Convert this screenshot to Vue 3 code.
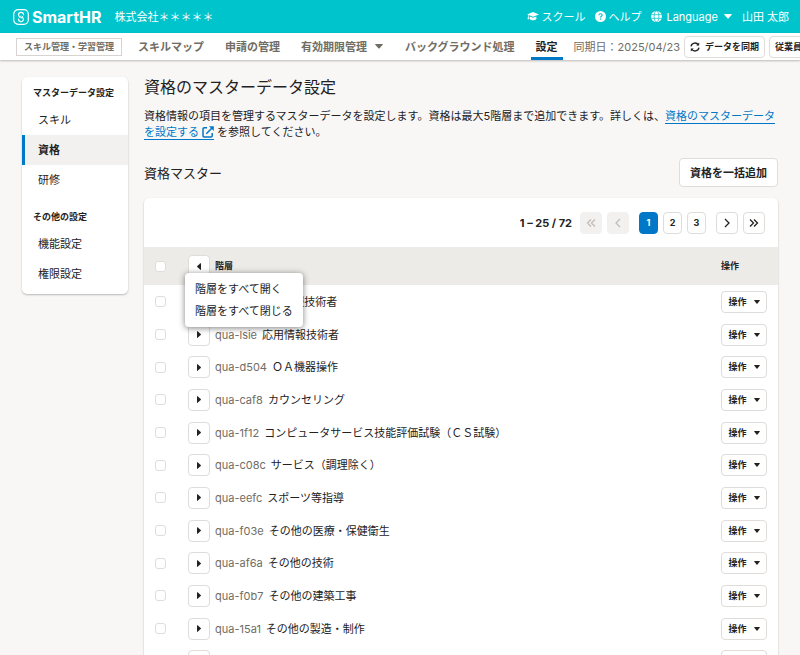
<script setup>
import { ref } from 'vue'

const menuOpen = ref(true)

const navItems = [
  { label: 'スキルマップ' },
  { label: '申請の管理' },
  { label: '有効期限管理', caret: true },
  { label: 'バックグラウンド処理' },
  { label: '設定', current: true },
]

const sideGroups = [
  {
    title: 'マスターデータ設定',
    items: [{ label: 'スキル' }, { label: '資格', current: true }, { label: '研修' }],
  },
  {
    title: 'その他の設定',
    items: [{ label: '機能設定' }, { label: '権限設定' }],
  },
]

const rows = [
  { code: 'qua-1fj1', name: '基本情報技術者' },
  { code: 'qua-lsie', name: '応用情報技術者' },
  { code: 'qua-d504', name: 'ＯＡ機器操作' },
  { code: 'qua-caf8', name: 'カウンセリング' },
  { code: 'qua-1f12', name: 'コンピュータサービス技能評価試験（ＣＳ試験）' },
  { code: 'qua-c08c', name: 'サービス（調理除く）' },
  { code: 'qua-eefc', name: 'スポーツ等指導' },
  { code: 'qua-f03e', name: 'その他の医療・保健衛生' },
  { code: 'qua-af6a', name: 'その他の技術' },
  { code: 'qua-f0b7', name: 'その他の建築工事' },
  { code: 'qua-15a1', name: 'その他の製造・制作' },
  { code: 'qua-3c9d', name: 'その他の専門・技術' },
]
</script>

<template>
  <div class="page">
    <header class="topbar">
      <a class="logo" href="#">
        <svg width="16" height="16" viewBox="0 0 16 16" fill="none" stroke="currentColor" aria-hidden="true">
          <rect x="0.7" y="0.7" width="14.6" height="14.6" rx="4.500" stroke-width="1.200" />
          <path d="M10.600 6.300V6A2.500 2.500 0 0 0 5.500 6c0 1.300.9 1.700 2.500 2.100s2.500.9 2.500 2a2.500 2.500 0 0 1-5 0V9.700" stroke-width="1.200" />
          <path d="M7.900 6.100v.3M8 9.700v.3M5.900 8.700 7 7.900M9 8.100l1.200-.9" stroke-width="1" />
        </svg>
        <span class="logo-text">SmartHR</span>
      </a>
      <span class="company">株式会社＊＊＊＊＊</span>
      <div class="top-links">
        <a href="#" class="top-link">
          <svg width="12" height="11" viewBox="0 0 12 11" fill="currentColor" aria-hidden="true">
            <path d="M6 1 12 3.4 6 5.8 1.6 4.1v1.3l.5 2.8H.5L1 5.4V3.8L0 3.4z" />
            <path d="M2.8 5.4 6 6.7l3.2-1.3.3 2.4C9.300 8.700 7.700 9.300 6 9.300S2.700 8.700 2.500 7.800z" />
          </svg>
          スクール
        </a>
        <a href="#" class="top-link">
          <svg width="11" height="11" viewBox="0 0 12 12" aria-hidden="true">
            <circle cx="6" cy="6" r="6" fill="currentColor" />
            <path d="M4.200 4.600C4.300 3.500 5 3 6 3s1.800.600 1.800 1.500C7.800 5.700 6.100 5.700 6.100 7" fill="none" stroke="#00c4cc" stroke-width="1.300" />
            <circle cx="6.100" cy="8.800" r="0.850" fill="#00c4cc" />
          </svg>
          ヘルプ
        </a>
        <button type="button" class="top-link language">
          <svg width="11" height="11" viewBox="0 0 12 12" aria-hidden="true">
            <circle cx="6" cy="6" r="6" fill="currentColor" />
            <g fill="none" stroke="#00c4cc" stroke-width="0.800">
              <ellipse cx="6" cy="6" rx="2.600" ry="6" />
              <path d="M0 4h12M0 8h12" />
            </g>
          </svg>
          <span>Language</span>
          <svg class="caret" width="8" height="5" viewBox="0 0 8 5" fill="currentColor" aria-hidden="true"><path d="M.600 0h6.800q.800 0 .3.700L4.600 4.300q-.600.600-1.200 0L.3.700Q-.2 0 .6 0z" /></svg>
        </button>
        <a href="#" class="top-link">山田 太郎</a>
      </div>
    </header>

    <nav class="appnav" aria-label="メイン">
      <span class="app-tag">スキル管理・学習管理</span>
      <ul class="nav-list">
        <li v-for="item in navItems" :key="item.label">
          <a href="#" class="nav-item" :class="{ current: item.current }">
            {{ item.label }}
            <svg v-if="item.caret" width="10" height="5" viewBox="0 0 10 5" fill="currentColor" aria-hidden="true"><path d="M1.600 0h6.800q.800 0 .3.700L5.600 4.300q-.600.600-1.200 0L1.300.700Q.8 0 1.600 0z" /></svg>
          </a>
        </li>
      </ul>
      <span class="sync-date">同期日：2025/04/23</span>
      <button type="button" class="btn nav-btn">
        <svg width="10" height="10" viewBox="0 0 10 10" fill="none" stroke="currentColor" stroke-width="1.300" aria-hidden="true">
          <path d="M1 4.300A4 4 0 0 1 8.400 3M9 5.700A4 4 0 0 1 1.600 7" />
          <path d="M9.200.600v3H6.200zM.8 9.400v-3h3z" fill="currentColor" stroke="none" />
        </svg>
        データを同期
      </button>
      <button type="button" class="btn nav-btn">従業員データ</button>
    </nav>

    <div class="layout">
      <aside class="sidebar">
        <section v-for="group in sideGroups" :key="group.title" class="side-group">
          <h2 class="side-title">{{ group.title }}</h2>
          <ul class="side-list">
            <li v-for="item in group.items" :key="item.label">
              <a href="#" class="side-item" :class="{ current: item.current }">{{ item.label }}</a>
            </li>
          </ul>
        </section>
      </aside>

      <main class="content">
        <h1 class="title">資格のマスターデータ設定</h1>
        <p class="lead">
          資格情報の項目を管理するマスターデータを設定します。資格は最大5階層まで追加できます。詳しくは、<a href="#" class="help-link">資格のマスターデータを設定する<svg class="ext" width="12" height="12" viewBox="0 0 12 12" fill="none" stroke="currentColor" stroke-width="1.500" aria-hidden="true"><path d="M5 1.800H2.200Q1 1.800 1 3v6.800Q1 11 2.200 11H9q1.200 0 1.200-1.200V7M4.300 7.700 10.500 1.500" /><path d="M7 .2h4.800V5z" fill="currentColor" stroke="none" /></svg></a>
          を参照してください。
        </p>

        <div class="section-head">
          <h2 class="section-title">資格マスター</h2>
          <button type="button" class="btn bulk-btn">資格を一括追加</button>
        </div>

        <section class="card">
          <div class="pager">
            <span class="range">1 – 25 / 72</span>
            <div class="pages">
              <button type="button" class="btn step" disabled aria-label="最初へ">
                <svg width="10" height="10" viewBox="0 0 10 10" aria-hidden="true"><path d="M5 1.500 1.500 5 5 8.500M9 1.500 5.500 5 9 8.500" /></svg>
              </button>
              <button type="button" class="btn step" disabled aria-label="前へ">
                <svg width="10" height="10" viewBox="0 0 10 10" aria-hidden="true"><path d="M7 1 3 5l4 4" /></svg>
              </button>
            </div>
            <div class="pages">
              <button type="button" class="btn num active" aria-current="page">1</button>
              <button type="button" class="btn num">2</button>
              <button type="button" class="btn num">3</button>
            </div>
            <div class="pages">
              <button type="button" class="btn step" aria-label="次へ">
                <svg width="10" height="10" viewBox="0 0 10 10" aria-hidden="true"><path d="m3 1 4 4-4 4" /></svg>
              </button>
              <button type="button" class="btn step" aria-label="最後へ">
                <svg width="10" height="10" viewBox="0 0 10 10" aria-hidden="true"><path d="M1 1.500 4.500 5 1 8.500M5 1.500 8.500 5 5 8.500" /></svg>
              </button>
            </div>
          </div>

          <table class="table">
            <thead>
              <tr>
                <th class="col-check"><input type="checkbox" class="check" aria-label="すべて選択" /></th>
                <th class="col-name">
                  <div class="cell">
                    <div class="menu-anchor">
                      <button type="button" class="btn toggle" aria-label="階層の開閉" :aria-expanded="menuOpen" @click="menuOpen = !menuOpen">
                        <svg width="4" height="7" viewBox="0 0 4 7" fill="currentColor" aria-hidden="true"><path d="M4 .5v6q0 .6-.6.300L.3 4q-.5-.5 0-1L3.400.200Q4-.1 4 .5z" /></svg>
                      </button>
                      <div v-if="menuOpen" class="menu">
                        <button type="button" class="menu-item">階層をすべて開く</button>
                        <button type="button" class="menu-item">階層をすべて閉じる</button>
                      </div>
                    </div>
                    階層
                  </div>
                </th>
                <th class="col-action">操作</th>
              </tr>
            </thead>
            <tbody>
              <tr v-for="row in rows" :key="row.code">
                <td class="col-check"><input type="checkbox" class="check" :aria-label="row.name" /></td>
                <td class="col-name">
                  <div class="cell">
                    <button type="button" class="btn toggle" :aria-label="row.name + 'を開く'">
                      <svg width="4" height="7" viewBox="0 0 4 7" fill="currentColor" aria-hidden="true"><path d="M0 .5v6q0 .6.6.300L3.700 4q.5-.5 0-1L.6.200Q0-.1 0 .5z" /></svg>
                    </button>
                    <span class="code">{{ row.code }}</span>
                    <span>{{ row.name }}</span>
                  </div>
                </td>
                <td class="col-action">
                  <button type="button" class="btn action">
                    操作
                    <svg width="6" height="4" viewBox="0 0 6 4" fill="currentColor" aria-hidden="true"><path d="M.5 0h5q.6 0 .3.5L3.500 3.400q-.5.500-1 0L.2.500Q-.1 0 .5 0z" /></svg>
                  </button>
                </td>
              </tr>
            </tbody>
          </table>
        </section>
      </main>
    </div>
  </div>
</template>

<style>
html {
  scrollbar-width: none;
  background: #f8f7f6;
}
</style>

<style scoped>
.page {
  font-family: Inter, "Noto Sans CJK JP", sans-serif;
  font-size: 11px;
  line-height: 16px;
  color: #23221e;
  overflow: hidden;
}
.page *,
.page *::before {
  box-sizing: border-box;
}
h1,
h2,
p,
ul {
  margin: 0;
  padding: 0;
  font-weight: 400;
}
ul {
  list-style: none;
}
a {
  color: inherit;
  text-decoration: none;
}
button {
  font: inherit;
  color: inherit;
  padding: 0;
  border: 0;
  background: none;
  white-space: nowrap;
}
svg {
  flex: none;
}

.topbar {
  display: flex;
  align-items: center;
  height: 33px;
  padding: 0 11px 0 13px;
  background: #00c4cc;
  color: #fff;
  white-space: nowrap;
}
.logo {
  display: flex;
  align-items: center;
  gap: 3px;
}
.logo-text {
  font-size: 16px;
  font-weight: 700;
}
.company {
  margin-left: 13px;
}
.top-links {
  display: flex;
  align-items: center;
  gap: 10px;
  margin-left: auto;
}
.top-link {
  display: flex;
  align-items: center;
  gap: 2px;
}
.language {
  gap: 4px;
}
.caret {
  margin-left: 2px;
}

.appnav {
  display: flex;
  align-items: center;
  height: 27px;
  padding-left: 16px;
  background: #fff;
  box-shadow: 0 1px 2px rgba(0, 0, 0, 0.25);
  white-space: nowrap;
}
.appnav > * {
  flex: none;
}
.app-tag {
  width: 106px;
  border: 1px solid #d6d3d0;
  font-size: 9px;
  font-weight: 700;
  text-align: center;
  color: #706d65;
}
.nav-list {
  display: flex;
  gap: 11px;
  margin: 0 11px;
}
.nav-item {
  display: flex;
  align-items: center;
  gap: 7px;
  height: 27px;
  padding: 0 5px;
  border-top: 3px solid transparent;
  border-bottom: 3px solid transparent;
  font-weight: 700;
  color: #706d65;
}
.nav-item.current {
  color: #23221e;
  border-bottom-color: #0077c7;
}
.sync-date {
  color: #706d65;
}

.btn {
  display: inline-flex;
  align-items: center;
  justify-content: center;
  height: 22px;
  border: 1px solid #dfdcd9;
  border-radius: 4px;
  background: #fff;
  font-weight: 700;
}
.nav-btn {
  gap: 5px;
  margin-left: 4px;
  padding: 0 5px;
  font-size: 9px;
}

.layout {
  display: flex;
  align-items: flex-start;
  gap: 16px;
  padding: 17px 22px 22px;
}
.sidebar {
  flex: none;
  width: 106px;
  padding: 8px 0 5px;
  border-radius: 5px;
  background: #fff;
  box-shadow: 0 1px 2px rgba(0, 0, 0, 0.25);
}
.side-group + .side-group {
  margin-top: 14px;
}
.side-title {
  padding-left: 11px;
  font-size: 9px;
  font-weight: 700;
  white-space: nowrap;
}
.side-group .side-list {
  padding-top: 4px;
}
.side-item {
  display: block;
  padding: 7px 0 7px 13px;
  border-left: 3px solid transparent;
}
.side-item.current {
  border-left-color: #0077c7;
  background: #f2f1f0;
  font-weight: 700;
}

.content {
  flex: 1;
  min-width: 0;
}
.title {
  font-size: 16px;
  line-height: 20px;
}
.lead {
  margin-top: 11px;
}
.help-link {
  color: #0077c7;
  border-bottom: 1px solid #0077c7;
}
.ext {
  margin-left: 3px;
  vertical-align: -2px;
}
.section-head {
  display: flex;
  align-items: center;
  justify-content: space-between;
  margin-top: 18px;
}
.section-title {
  font-size: 13px;
}
.bulk-btn {
  height: 29px;
  padding: 0 10px;
}

.card {
  margin-top: 11px;
  border-radius: 5px;
  background: #fff;
  box-shadow: 0 1px 2px rgba(0, 0, 0, 0.25);
}
.pager {
  display: flex;
  align-items: center;
  justify-content: flex-end;
  gap: 10px;
  height: 49px;
  padding-right: 13px;
}
.range {
  font-weight: 700;
}
.pages {
  display: flex;
  gap: 5px;
}
.range + .pages {
  margin-left: -2px;
}
.step {
  width: 22px;
}
.step svg {
  fill: none;
  stroke: currentColor;
  stroke-width: 1.3;
}
.step:disabled {
  border-color: #f2f1f0;
  background: #f2f1f0;
  color: #c1bdb7;
}
.num {
  width: 19px;
  font-size: 9px;
}
.num.active {
  border-color: #0077c7;
  background: #0077c7;
  color: #fff;
}

.table {
  width: 100%;
  border-collapse: collapse;
}
th,
td {
  padding: 0;
  text-align: left;
  vertical-align: middle;
}
thead tr {
  height: 38px;
  background: #edebe8;
}
th {
  font-size: 9px;
  font-weight: 700;
}
tbody tr {
  height: 33px;
}
tbody tr:nth-child(3n) {
  height: 32px;
}
.table .col-check {
  width: 44px;
  padding-left: 11px;
}
.table .col-action {
  width: 57px;
}
.check {
  appearance: none;
  display: block;
  width: 11px;
  height: 11px;
  margin: 0;
  border: 1px solid #dfdcd9;
  border-radius: 3px;
  background: #fff;
}
.cell {
  display: flex;
  align-items: center;
  gap: 5px;
}
.toggle {
  width: 22px;
}
.code {
  color: #706d65;
}
.action {
  gap: 7px;
  width: 46px;
  font-size: 9px;
}
.menu-anchor {
  position: relative;
  display: flex;
}
.menu {
  position: absolute;
  top: 18px;
  left: -3px;
  z-index: 1;
  padding: 5px 0;
  border-radius: 4px;
  background: #fff;
  box-shadow: 0 1px 6px rgba(0, 0, 0, 0.5);
}
.menu-item {
  display: block;
  padding: 3px 10px;
  font-size: 11px;
  font-weight: 400;
}
</style>
